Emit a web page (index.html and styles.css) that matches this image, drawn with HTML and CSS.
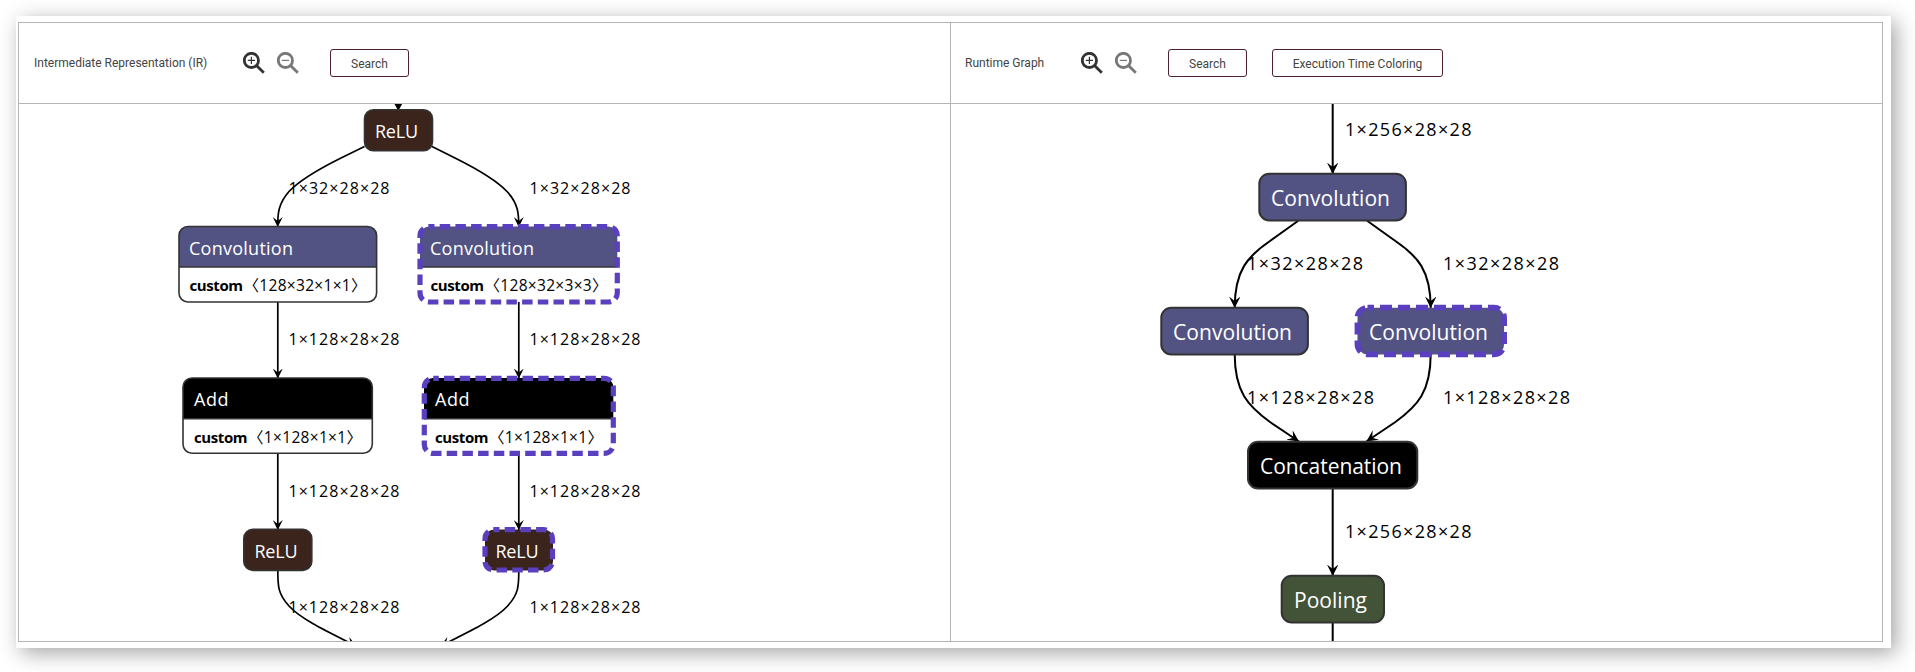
FILE: index.html
```html
<!DOCTYPE html>
<html lang="en">
<head>
<meta charset="utf-8">
<title>Graph comparison</title>
<link rel="stylesheet" href="styles.css">
</head>
<body>
<main class="card">
<div class="frame">
<section class="pane">
  <header class="toolbar">
    <h2 class="title title-ir">Intermediate Representation (IR)</h2>
    <div class="zooms">
      <svg class="zoom" viewBox="0 0 22 22"><circle cx="8.4" cy="8.4" r="7.1"/><path d="M13.5 13.5L20.8 20.8"/><path class="thin" d="M4.8 8.4h7.2M8.4 4.8v7.2"/></svg>
      <svg class="zoom muted" viewBox="0 0 22 22"><circle cx="8.4" cy="8.4" r="7.1"/><path d="M13.5 13.5L20.8 20.8"/><path class="thin" d="M4.8 8.4h7.2"/></svg>
    </div>
    <button class="btn btn-search">Search</button>
  </header>
  <svg class="graph" viewBox="19 104 931 537">
    <defs>
      <marker id="vee" viewBox="0 0 10 10" refX="10" refY="5" markerUnits="userSpaceOnUse" markerWidth="10" markerHeight="10" orient="auto"><path d="M0 0L10 5L0 10L4 5Z"/></marker>
    </defs>
    <g class="edge">
      <path d="M398.3 95V104"/>
      <path marker-end="url(#vee)" d="M364.5 146.5L340 158.500C315 171 298 182 289 191.500C278 204 277.700 214 277.700 227"/>
      <path marker-end="url(#vee)" d="M432 146.500L456 158.500C481 171 498 182 507 191.500C518.500 204 518.800 214 518.800 227"/>
      <path marker-end="url(#vee)" d="M277.800 302V378.500"/>
      <path marker-end="url(#vee)" d="M518.800 302V378.500"/>
      <path marker-end="url(#vee)" d="M277.800 454V530"/>
      <path marker-end="url(#vee)" d="M518.800 454V530"/>
      <path marker-end="url(#vee)" d="M277.800 571C277.800 586 278 594 289 606C300 618 320 628 356 646"/>
      <path marker-end="url(#vee)" d="M518.800 571C518.800 586 518.600 594 507.600 606C496.600 618 476.600 628 440.600 646"/>
    </g>
    <path d="M394.500 104h7.600L398.300 111Z"/>
    <g class="label">
      <text x="288.500" y="194" textLength="101">1×32×28×28</text><text x="529.500" y="194" textLength="101">1×32×28×28</text>
      <text x="288.500" y="344.700" textLength="111">1×128×28×28</text><text x="529.500" y="344.700" textLength="111">1×128×28×28</text>
      <text x="288.500" y="497" textLength="111">1×128×28×28</text><text x="529.500" y="497" textLength="111">1×128×28×28</text>
      <text x="288.500" y="612.700" textLength="111">1×128×28×28</text><text x="529.500" y="612.700" textLength="111">1×128×28×28</text>
    </g>
    <rect class="node relu" x="364.500" y="109.700" width="68" height="41" rx="9"/>
    <text class="name" x="375" y="137.700" textLength="43">ReLU</text>

    <rect class="body" x="179" y="226.500" width="197.600" height="75.500" rx="9"/>
    <path class="conv" d="M179 267V235.500a9 9 0 0 1 9-9h179.600a9 9 0 0 1 9 9V267Z"/>
    <path class="rule" d="M179 267h197.600"/>
    <rect class="outline" x="179" y="226.500" width="197.600" height="75.500" rx="9"/>
    <text class="name" x="189" y="254.500" textLength="104">Convolution</text>
    <text class="attr" x="189.500" y="291" textLength="53.500">custom</text>
    <text class="value" x="243.500" y="291" textLength="123">〈128×32×1×1〉</text>

    <path class="conv" d="M420 267V235.500a9 9 0 0 1 9-9h179.300a9 9 0 0 1 9 9V267Z"/>
    <path class="rule" d="M420 267h197.300"/>
    <rect class="selected" x="420" y="226.700" width="197.300" height="75.300" rx="9"/>
    <text class="name" x="430" y="254.500" textLength="104">Convolution</text>
    <text class="attr" x="430.500" y="291" textLength="53.500">custom</text>
    <text class="value" x="484.500" y="291" textLength="123">〈128×32×3×3〉</text>

    <path class="black" d="M183 418.700V387a9 9 0 0 1 9-9h171.300a9 9 0 0 1 9 9V418.700Z"/>
    <path class="rule" d="M183 418.700h189.300"/>
    <rect class="outline" x="183" y="378" width="189.300" height="75.300" rx="9"/>
    <text class="name" x="194" y="405.700" textLength="34.500">Add</text>
    <text class="attr" x="194" y="442.700" textLength="53.500">custom</text>
    <text class="value" x="248" y="442.700" textLength="114">〈1×128×1×1〉</text>

    <path class="black" d="M424 418.700V387a9 9 0 0 1 9-9h171.300a9 9 0 0 1 9 9V418.700Z"/>
    <path class="rule" d="M424 418.700h189.300"/>
    <rect class="selected" x="424.300" y="378.400" width="189" height="75" rx="9"/>
    <text class="name" x="435" y="405.700" textLength="34.500">Add</text>
    <text class="attr" x="435" y="442.700" textLength="53.500">custom</text>
    <text class="value" x="489" y="442.700" textLength="114">〈1×128×1×1〉</text>

    <rect class="node relu" x="243.800" y="529.400" width="68" height="41" rx="9"/>
    <text class="name" x="254.500" y="557.700" textLength="43">ReLU</text>
    <rect class="relu" x="485" y="529.400" width="68" height="41" rx="9"/>
    <rect class="selected" x="485" y="529.700" width="67.500" height="40.300" rx="9"/>
    <text class="name" x="495.500" y="557.700" textLength="43">ReLU</text>
  </svg>
</section>
<section class="pane">
  <header class="toolbar">
    <h2 class="title title-runtime">Runtime Graph</h2>
    <div class="zooms">
      <svg class="zoom" viewBox="0 0 22 22"><circle cx="8.4" cy="8.4" r="7.1"/><path d="M13.5 13.5L20.8 20.8"/><path class="thin" d="M4.8 8.4h7.2M8.4 4.8v7.2"/></svg>
      <svg class="zoom muted" viewBox="0 0 22 22"><circle cx="8.4" cy="8.4" r="7.1"/><path d="M13.5 13.5L20.8 20.8"/><path class="thin" d="M4.8 8.4h7.2"/></svg>
    </div>
    <button class="btn btn-search">Search</button>
    <button class="btn btn-coloring">Execution Time Coloring</button>
  </header>
  <svg class="graph large" viewBox="951 104 931 537">
    <defs>
      <marker id="vee-large" viewBox="0 0 10 10" refX="10" refY="5" markerUnits="userSpaceOnUse" markerWidth="11.500" markerHeight="11.500" orient="auto"><path d="M0 0L10 5L0 10L4 5Z"/></marker>
    </defs>
    <g class="edge">
      <path marker-end="url(#vee-large)" d="M1332.700 100V174"/>
      <path marker-end="url(#vee-large)" d="M1298.300 220.700L1270 241C1248 256 1234.700 270 1234.700 308"/>
      <path marker-end="url(#vee-large)" d="M1367.100 220.700L1395.400 241C1417.400 256 1430.700 270 1430.700 308"/>
      <path marker-end="url(#vee-large)" d="M1234.700 354C1234.700 392 1248 406 1270 422L1299 441.500"/>
      <path marker-end="url(#vee-large)" d="M1430.700 354C1430.700 392 1417.400 406 1395.400 422L1366.400 441.500"/>
      <path marker-end="url(#vee-large)" d="M1332.700 488V576"/>
      <path d="M1332.700 622V645"/>
    </g>
    <g class="label">
      <text x="1345" y="135.700" textLength="126.500">1×256×28×28</text>
      <text x="1247" y="269.700" textLength="116">1×32×28×28</text><text x="1443" y="269.700" textLength="116">1×32×28×28</text>
      <text x="1247" y="403.800" textLength="127">1×128×28×28</text><text x="1443" y="403.800" textLength="127">1×128×28×28</text>
      <text x="1345" y="537.700" textLength="126.500">1×256×28×28</text>
    </g>
    <rect class="node conv" x="1259.300" y="173.700" width="146.600" height="46.800" rx="10"/>
    <text class="name" x="1271" y="205.700" textLength="119">Convolution</text>
    <rect class="node conv" x="1161.300" y="307.700" width="146.600" height="46.800" rx="10"/>
    <text class="name" x="1173" y="339.800" textLength="119">Convolution</text>
    <rect class="conv" x="1357.500" y="307.700" width="146.600" height="46.800" rx="10"/>
    <rect class="selected" x="1357.500" y="307.700" width="146.600" height="46.600" rx="10"/>
    <text class="name" x="1369" y="339.800" textLength="119">Convolution</text>
    <rect class="node black" x="1248" y="441.700" width="169.300" height="46.800" rx="10"/>
    <text class="name" x="1260" y="474" textLength="142">Concatenation</text>
    <rect class="node pool" x="1281.700" y="575.700" width="102.300" height="46.800" rx="10"/>
    <text class="name" x="1294" y="608" textLength="73">Pooling</text>
  </svg>
</section>
</div>
</main>
</body>
</html>
```
FILE: styles.css
```css
* { box-sizing: border-box; }
body { margin: 0; padding: 16px 24px 24px 16px; height: 672px; overflow: hidden; background: #fff; }
.card { width: 1875px; height: 632px; padding: 6px 8px 6px 2px; background: #fff; box-shadow: 5px 5px 20px rgba(0, 0, 0, .36); }
.frame { display: flex; width: 1865px; height: 620px; border: 1px solid #b3b5b8; }
.pane { width: 931px; display: flex; flex-direction: column; }
.pane + .pane { width: 932px; border-left: 1px solid #b3b5b8; }
.toolbar { display: flex; align-items: center; height: 81px; padding-left: 15px; border-bottom: 1px solid #b3b5b8; font-family: Roboto, sans-serif; }
.pane + .pane .toolbar { padding-left: 14px; }
.title { margin: 0; font-size: 12px; font-weight: 400; line-height: 16px; color: #444; white-space: nowrap; }
.title-ir { width: 209px; }
.title-runtime { width: 116px; }
.zooms { display: flex; gap: 12px; }
.zoom { display: block; width: 22px; height: 22px; fill: none; stroke: #333; stroke-width: 2.8; }
.zoom .thin { stroke-width: 1.2; }
.muted { stroke: #777; }
.btn { height: 28px; padding: 1px 0 0; border: 1px solid #4f1f34; border-radius: 3px; background: #fff; font: 12px Roboto, sans-serif; color: #444; }
.btn-search { width: 79px; margin-left: 31px; }
.btn-coloring { width: 171px; margin-left: 25px; }
.graph { display: block; width: 931px; height: 537px; font-family: "Open Sans", "Noto Sans CJK SC", sans-serif; }
.edge path { fill: none; stroke: #000; stroke-width: 1.7; }
.edge marker path, marker path { fill: #000; stroke: none; }
.large .edge path { stroke-width: 2; }
.label { font-size: 16px; font-weight: 400; }
.large .label { font-size: 18px; }
.name { font-size: 18px; fill: #fff; }
.large .name { font-size: 21px; }
.attr { font-size: 15px; font-weight: 700; }
.value { font-size: 15.500px; font-weight: 400; }
.node, .outline { stroke: #333; stroke-width: 1.6; }
.large .node { stroke-width: 2; }
.outline, .body { fill: none; }
.rule { stroke: #333; stroke-width: 1.5; }
.relu { fill: #3a241b; }
.conv { fill: #525382; }
.black { fill: #000; }
.pool { fill: #435338; }
.selected { fill: none; stroke: #5a3fbf; stroke-width: 5.200; stroke-dasharray: 10.500 5.200; stroke-dashoffset: 5; }
.large .selected { stroke-width: 5.800; stroke-dasharray: 12 6; stroke-dashoffset: 5.500; }
```
